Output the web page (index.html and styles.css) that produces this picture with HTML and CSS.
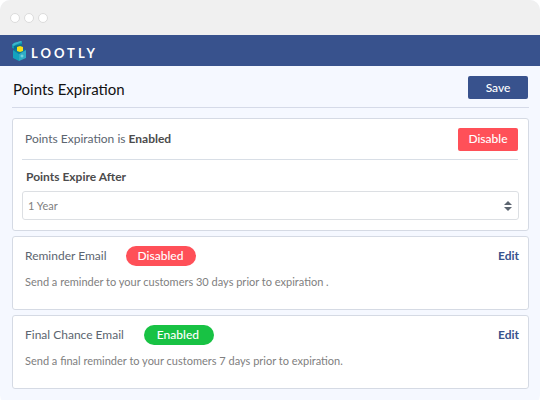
FILE: index.html
```html
<!DOCTYPE html>
<html lang="en">
<head>
<meta charset="utf-8">
<title>Points Expiration</title>
<link rel="stylesheet" href="styles.css">
</head>
<body>
<div class="window">
  <div class="chrome"><span class="dot"></span><span class="dot"></span><span class="dot"></span></div>
  <header class="brand">
    <svg class="logo" viewBox="0 0 16 22" aria-hidden="true">
      <path fill="#1495b0" d="M1 5 3 3l7-2 1 1v3L4 7v2L1 8z"/>
      <path fill="#0a6f8d" d="M3 6l8-2v3l-4 2-4 1z"/>
      <path fill="#3db5c9" d="M1 5 3 3l7-2 1 1-7 3-1 1z"/>
      <path fill="#087f9e" d="M2 10l6-2 7 2-7 4z"/>
      <path fill="#14a3bd" d="M2 10l6 4v7l-6-3z"/>
      <path fill="#2fadc5" d="M8 14l7-4v8l-7 3z"/>
      <path fill="#f8df16" d="M6 7l3-1 3 1v4l-3 1-3-1z"/>
      <circle cx="11" cy="16" r="1" fill="none" stroke="#8bdde4"/>
    </svg>
    <span class="wordmark">LOOTLY</span>
  </header>
  <main class="page">
    <div class="page-head">
      <h1>Points Expiration</h1>
      <button class="btn btn-save" type="button">Save</button>
    </div>
    <section class="card settings">
      <div class="status">
        <p class="name">Points Expiration is <strong>Enabled</strong></p>
        <button class="btn btn-disable" type="button">Disable</button>
      </div>
      <label class="field-label" for="expire">Points Expire After</label>
      <div class="select-wrap">
        <select id="expire"><option>1 Year</option></select>
        <svg class="arrows" viewBox="0 0 8 10" aria-hidden="true"><path d="M0 4 4 0l4 4zM0 6h8l-4 4z"/></svg>
      </div>
    </section>
    <section class="card email">
      <div class="email-head">
        <h2 class="name">Reminder Email</h2>
        <span class="badge off">Disabled</span>
        <a class="edit" href="#reminder">Edit</a>
      </div>
      <p class="note">Send a reminder to your customers 30 days prior to expiration .</p>
    </section>
    <section class="card email">
      <div class="email-head">
        <h2 class="name">Final Chance Email</h2>
        <span class="badge on">Enabled</span>
        <a class="edit" href="#final">Edit</a>
      </div>
      <p class="note">Send a final reminder to your customers 7 days prior to expiration.</p>
    </section>
  </main>
</div>
</body>
</html>
```
FILE: styles.css
```css
* { box-sizing: border-box; }
body { margin: 0; background: #fff; font: 12px/16px Lato, sans-serif; color: #5c6570; }
h1, h2, p { margin: 0; font-weight: 400; }
.window { min-height: 100vh; border-radius: 10px; overflow: hidden; background: #f5f8ff; }
.chrome { display: flex; align-items: center; gap: 4px; height: 35px; padding: 0 10px; background: #f0f0f0; }
.dot { width: 10px; height: 10px; border: 1px solid #dcdcdc; border-radius: 50%; background: #fff; }
.brand { display: flex; align-items: center; gap: 4px; height: 31px; padding: 0 11px; background: #38528d; color: #fff; }
.logo { width: 16px; height: 22px; }
.wordmark { padding-top: 4px; font-size: 13px; font-weight: 700; letter-spacing: 3px; }
.page { padding: 0 11px 11px 12px; }
.page-head { display: flex; align-items: center; justify-content: space-between; height: 42px; padding: 2px 1px 0; border-bottom: 1px solid #d5dae8; margin-bottom: 10px; }
h1 { padding-top: 2px; font-size: 15px; line-height: 20px; color: #111; }
.btn { width: 60px; height: 23px; padding: 0; border: 0; border-radius: 2px; font: 500 12px/16px Lato, sans-serif; color: #fff; }
.btn-save { background: #38528d; }
.btn-disable { background: #ff5058; }
.card { margin-bottom: 5px; border: 1px solid #d5dae4; border-radius: 3px; background: #fff; }
.settings { padding: 0 9px 10px; }
.status { display: flex; align-items: center; justify-content: space-between; height: 41px; padding-left: 3px; margin-right: 1px; border-bottom: 1px solid #d8dee6; }
strong, .field-label, .edit { font-weight: 700; }
strong, .field-label { color: #4c4c4c; }
.field-label { display: block; padding: 9px 4px 6px; }
.select-wrap { position: relative; }
select { display: block; width: 100%; height: 29px; padding: 0 5px; appearance: none; border: 1px solid #dcdfe3; border-radius: 3px; background: #fff; font: 11px/16px Lato, sans-serif; color: #808080; }
.arrows { position: absolute; top: 10px; right: 7px; width: 8px; height: 10px; fill: #5c6570; pointer-events: none; }
.email { height: 74px; padding: 9px 9px 0 12px; }
.email-head { display: flex; align-items: center; height: 20px; }
h2 { font-size: 12px; }
.badge { width: 70px; padding-right: 2px; margin-left: 20px; border-radius: 10px; font-weight: 500; line-height: 20px; text-align: center; color: #fff; }
.off { background: #ff5058; }
.on { background: #18c244; }
.edit { margin-left: auto; color: #38528d; text-decoration: none; }
.note { padding-top: 8px; font-size: 11px; color: #808080; }
```
